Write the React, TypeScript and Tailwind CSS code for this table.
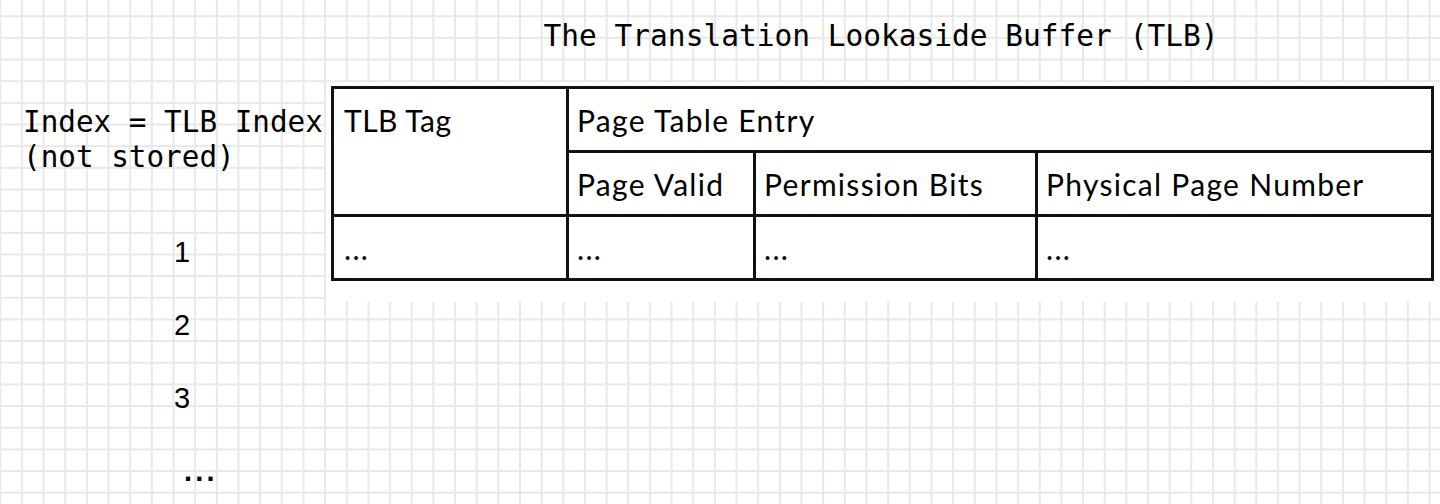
export default function App() {
  const cell = "border-[#111] pt-[13px] tracking-[1.3px]";

  return (
    <main className="flex h-[504px] w-[1440px] overflow-hidden bg-white bg-[linear-gradient(to_right,#e8e8e8_1.5px,transparent_1.5px),linear-gradient(to_bottom,#e8e8e8_1.5px,transparent_1.5px)] bg-[size:21.667px_21.667px] bg-[position:-0.75px_15.25px] text-black">
      {/* Left: index column */}
      <div className="w-[326px] shrink-0 pt-[105px]">
        <div className="pl-[23px] font-['DejaVu_Sans_Mono',monospace] text-[29.3px] leading-[35px]">
          <div>Index = TLB Index</div>
          <div>(not stored)</div>
        </div>
        <div className="mt-[41px] font-['Liberation_Sans',Arial,sans-serif] text-[29px] leading-[73px]">
          <div className="pl-[174px]">1</div>
          <div className="pl-[174px]">2</div>
          <div className="pl-[174px]">3</div>
          <div className="pl-[184px] font-bold tracking-[3.2px]">...</div>
        </div>
      </div>

      {/* Right: title + table picture */}
      <div className="flex-1">
        <div className="h-[82px] pt-[18px] pr-[4px] text-center font-['DejaVu_Sans_Mono',monospace] text-[29.5px] leading-[36px]">
          The Translation Lookaside Buffer (TLB)
        </div>
        <div className="h-[220px] bg-white pt-[4px] pl-[5px]">
          <div className="grid w-fit grid-cols-[232px_187px_282px_396px] grid-rows-[61px_64px_64px] border-[3px] border-[#111] font-['Lato',sans-serif] text-[30px] leading-[36px]">
            <div className={`${cell} row-span-2 pl-[10px] !tracking-[0.5px]`}>TLB Tag</div>
            <div className={`${cell} col-span-3 border-l-[3px] pl-[8px]`}>Page Table Entry</div>

            <div className={`${cell} border-l-[3px] border-t-[3px] pl-[8px]`}>Page Valid</div>
            <div className={`${cell} border-l-[3px] border-t-[3px] pl-[8px]`}>Permission Bits</div>
            <div className={`${cell} border-l-[3px] border-t-[3px] pl-[8px]`}>Physical Page Number</div>

            <div className={`${cell} border-t-[3px] pl-[10px]`}>...</div>
            <div className={`${cell} border-l-[3px] border-t-[3px] pl-[8px]`}>...</div>
            <div className={`${cell} border-l-[3px] border-t-[3px] pl-[8px]`}>...</div>
            <div className={`${cell} border-l-[3px] border-t-[3px] pl-[8px]`}>...</div>
          </div>
        </div>
      </div>
    </main>
  );
}
